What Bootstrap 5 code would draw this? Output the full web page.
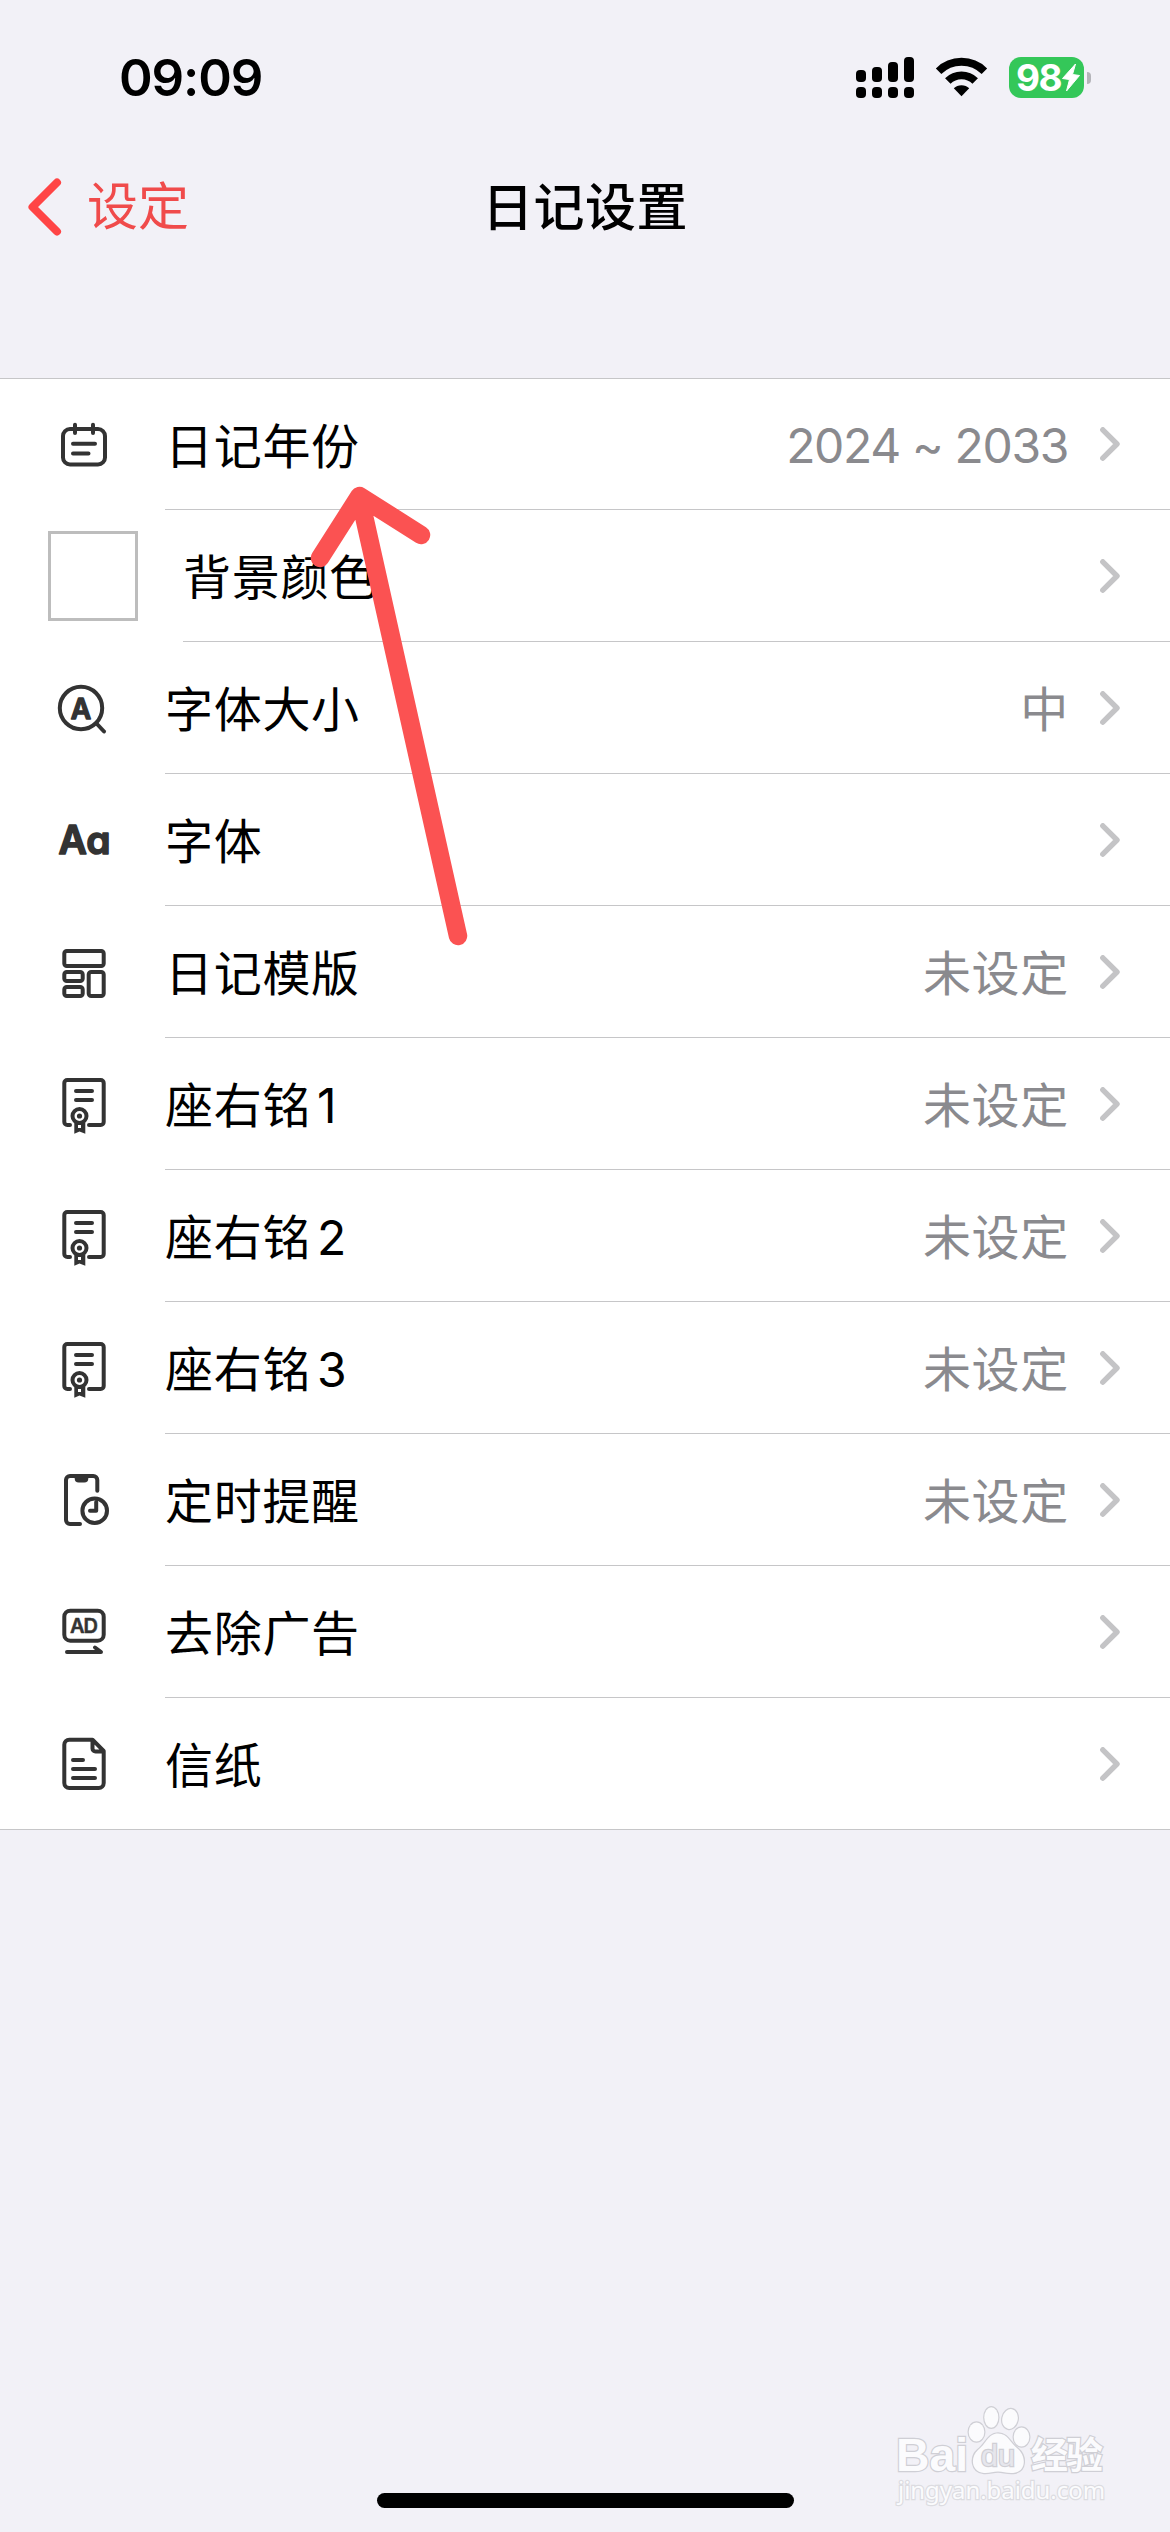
<!DOCTYPE html>
<html lang="zh-CN">
<head>
<meta charset="utf-8">
<meta name="viewport" content="width=device-width, initial-scale=1">
<title>日记设置</title>
<link href="https://cdn.jsdelivr.net/npm/bootstrap@5.3.0/dist/css/bootstrap.min.css" rel="stylesheet">
<style>
  body { background: #f2f1f7; color: #000; font-family: Inter, "Noto Sans CJK SC", sans-serif; }
  .screen { width: 1170px; height: 2532px; overflow: hidden; }
  svg { display: block; flex: none; }
  .status { height: 155px; padding: 0 79px 0 119px; }
  .clock { font-size: 51px; font-weight: 600; line-height: 60px; letter-spacing: -1.1px; padding-top: 1px; }
  .battery { width: 75px; height: 41px; border-radius: 12px; background: #34c759; color: #fff; font-size: 37px; font-weight: 700; line-height: 41px; padding-left: 7px; letter-spacing: -1.6px; }
  .nub { width: 4px; height: 12px; border-radius: 0 4px 4px 0; background: #b4b4b9; margin-left: 3px; }
  .topbar { height: 105px; padding: 0 28px; font-size: 51px; line-height: 60px; }
  .back { color: #f04b4b; gap: 25px; margin-top: -2px; }
  .heading { font-weight: 500; font-size: 51px; letter-spacing: .4px; line-height: 60px; margin: 0; }
  .settings { margin-top: 118px; border-top: 1px solid #c6c6c8; border-bottom: 1px solid #c6c6c8; background: #fff; }
  .setting { height: 132px; padding-left: 48px; gap: 45px; font-size: 48px; }
  .setting:first-child, .setting:last-child { height: 131px; }
  .setting:last-child .cell { border-bottom: 0; }
  .cell { border-bottom: 1px solid #c6c6c8; padding-right: 50px; }
  .label, .value { line-height: 60px; letter-spacing: .7px; padding-top: 5px; }
  .value { color: #8a8a8e; margin-right: 31px; }
  .years { letter-spacing: -1.35px; padding-top: 3px; margin-right: 32px; }
  .num { margin-left: 6px; }
  .swatch { width: 90px; height: 90px; border: 3px solid #bdbdbd; background: #fff; }
  .ico { width: 72px; height: 72px; fill: none; stroke: #333; stroke-width: 4; stroke-linecap: round; stroke-linejoin: round; }
  .ico text { fill: #333; font-family: Inter, sans-serif; font-weight: 600; font-feature-settings: "cv11"; }
  .pointer { left: 300px; top: 470px; }
  .homebar { width: 417px; height: 15px; border-radius: 8px; background: #000; left: 377px; top: 2493px; }
  .watermark { left: 880px; top: 2395px; }
</style>
</head>
<body>
<svg width="0" height="0" class="position-absolute" aria-hidden="true">
  <defs>
    <symbol id="chev" viewBox="0 0 20 34"><path d="M2.8 2.8 17 17 2.8 31.2" fill="none" stroke="#c4c4c6" stroke-width="5.4" stroke-linecap="round" stroke-linejoin="round"/></symbol>
    <symbol id="award" viewBox="0 0 72 72">
      <path d="M22 57H19.300a3 3 0 0 1-3-3V15a3 3 0 0 1 3-3H52.700a3 3 0 0 1 3 3V54a3 3 0 0 1-3 3H41M28 23H44M28 32H44"/>
      <circle cx="31.500" cy="48" r="7"/><circle cx="31.500" cy="48" r="2.600" fill="#333" stroke="none"/>
      <path d="M26.300 55V65.700L31.500 63.500 37.300 65.700V55Z" fill="#333" stroke="none"/><rect x="30" y="57" width="3" height="3" fill="#fff" stroke="none"/>
    </symbol>
  </defs>
</svg>
<main class="screen position-relative">
  <header>
    <div class="status d-flex align-items-center justify-content-between">
      <div class="clock">09:09</div>
      <div class="d-flex align-items-center">
        <svg width="58" height="41" viewBox="0 0 58 41"><rect y="13" width="10" height="12" rx="4"/><rect x="16" y="10" width="10" height="15" rx="4"/><rect x="32" y="5" width="10" height="20" rx="4"/><rect x="48" width="10" height="25" rx="4"/><rect y="30" width="10" height="11" rx="4"/><rect x="16" y="30" width="10" height="11" rx="4"/><rect x="32" y="30" width="10" height="11" rx="4"/><rect x="48" y="30" width="10" height="11" rx="4"/></svg>
        <svg class="wifi" width="95" height="41" viewBox="-22 0 95 41"><g fill="none" stroke="#000" stroke-width="7.800"><path d="M2.600 14.200A32.500 32.500 0 0 1 48.400 14.200"/><path d="M11.800 24A19.500 19.500 0 0 1 39.200 24"/></g><path d="M25.500 39.200 17.800 31.300A11 11 0 0 1 33.200 31.300Z"/></svg>
        <div class="battery d-flex align-items-center"><span>98</span><svg width="20" height="29" viewBox="0 0 20 29" class="ms-auto me-1"><path d="M14.500 1 1.500 15.500 8.500 16.500 5.500 28 18.500 12.500 11.500 11.500Z" fill="#fff" stroke="#fff" stroke-linejoin="round"/></svg></div>
        <div class="nub"></div>
      </div>
    </div>
    <nav class="topbar d-flex align-items-center position-relative">
      <div class="back d-flex align-items-center"><svg width="34" height="58" viewBox="0 0 34 58"><path d="M29 4.500 4.500 29 29 53.500" fill="none" stroke="#ff4545" stroke-width="8" stroke-linecap="round" stroke-linejoin="round"/></svg><span>设定</span></div>
      <h1 class="heading position-absolute top-50 start-50 translate-middle text-nowrap">日记设置</h1>
    </nav>
  </header>
  <section class="settings">
    <div class="setting d-flex align-items-center">
      <svg class="ico" viewBox="0 0 72 72"><rect x="15" y="20" width="42" height="35.500" rx="7"/><path d="M27 15.700V24M45 15.700V24M25 34.700H47M25 44.500H40.500"/></svg>
      <div class="cell d-flex align-items-center flex-fill h-100"><span class="label">日记年份</span><span class="value years ms-auto">2024 ~ 2033</span><svg width="20" height="34"><use href="#chev"/></svg></div>
    </div>
    <div class="setting d-flex align-items-center">
      <div class="swatch"></div>
      <div class="cell d-flex align-items-center flex-fill h-100"><span class="label">背景颜色</span><svg class="ms-auto" width="20" height="34"><use href="#chev"/></svg></div>
    </div>
    <div class="setting d-flex align-items-center">
      <svg class="ico" viewBox="0 0 72 72"><circle cx="33" cy="36" r="21.200"/><path d="M49 52 56 59.500"/><text x="33" y="46.500" font-size="28" text-anchor="middle" stroke-width="1.400">A</text></svg>
      <div class="cell d-flex align-items-center flex-fill h-100"><span class="label">字体大小</span><span class="value ms-auto">中</span><svg width="20" height="34"><use href="#chev"/></svg></div>
    </div>
    <div class="setting d-flex align-items-center">
      <svg class="ico" viewBox="0 0 72 72"><text x="10.500" y="49.500" font-size="39" stroke-width="1.600" textLength="52">Aa</text></svg>
      <div class="cell d-flex align-items-center flex-fill h-100"><span class="label">字体</span><svg class="ms-auto" width="20" height="34"><use href="#chev"/></svg></div>
    </div>
    <div class="setting d-flex align-items-center">
      <svg class="ico" viewBox="0 0 72 72"><rect x="16.300" y="15" width="39.400" height="15" rx="2.500"/><rect x="16.300" y="36" width="18.400" height="9" rx="2.500"/><rect x="16.300" y="51" width="18.400" height="9" rx="2.500"/><rect x="40.700" y="36" width="15" height="24" rx="2.500"/></svg>
      <div class="cell d-flex align-items-center flex-fill h-100"><span class="label">日记模版</span><span class="value ms-auto">未设定</span><svg width="20" height="34"><use href="#chev"/></svg></div>
    </div>
    <div class="setting d-flex align-items-center">
      <svg class="ico"><use href="#award"/></svg>
      <div class="cell d-flex align-items-center flex-fill h-100"><span class="label">座右铭<span class="num">1</span></span><span class="value ms-auto">未设定</span><svg width="20" height="34"><use href="#chev"/></svg></div>
    </div>
    <div class="setting d-flex align-items-center">
      <svg class="ico"><use href="#award"/></svg>
      <div class="cell d-flex align-items-center flex-fill h-100"><span class="label">座右铭<span class="num">2</span></span><span class="value ms-auto">未设定</span><svg width="20" height="34"><use href="#chev"/></svg></div>
    </div>
    <div class="setting d-flex align-items-center">
      <svg class="ico"><use href="#award"/></svg>
      <div class="cell d-flex align-items-center flex-fill h-100"><span class="label">座右铭<span class="num">3</span></span><span class="value ms-auto">未设定</span><svg width="20" height="34"><use href="#chev"/></svg></div>
    </div>
    <div class="setting d-flex align-items-center">
      <svg class="ico" viewBox="0 0 72 72"><path d="M49.300 26.700V16a4 4 0 0 0-4-4H22a4 4 0 0 0-4 4V56a4 4 0 0 0 4 4H32"/><path d="M26.700 12H40.300V14.500a4 4 0 0 1-4 4H30.700a4 4 0 0 1-4-4Z" fill="#333" stroke="none"/><circle cx="46.700" cy="46.700" r="12.300"/><path d="M48.200 38V46.800H42"/></svg>
      <div class="cell d-flex align-items-center flex-fill h-100"><span class="label">定时提醒</span><span class="value ms-auto">未设定</span><svg width="20" height="34"><use href="#chev"/></svg></div>
    </div>
    <div class="setting d-flex align-items-center">
      <svg class="ico" viewBox="0 0 72 72"><rect x="16.300" y="14.700" width="39.400" height="30" rx="6"/><text x="36" y="37.300" font-size="20" text-anchor="middle" stroke-width=".5" textLength="28">AD</text><path d="M19 56H53L47 51.500"/></svg>
      <div class="cell d-flex align-items-center flex-fill h-100"><span class="label">去除广告</span><svg class="ms-auto" width="20" height="34"><use href="#chev"/></svg></div>
    </div>
    <div class="setting d-flex align-items-center">
      <svg class="ico" viewBox="0 0 72 72"><path d="M44.500 11.700H21.300a5 5 0 0 0-5 5V55a5 5 0 0 0 5 5H50.700a5 5 0 0 0 5-5V23ZM44.500 12V20.500a3 3 0 0 0 3 3H55M25 32H35M25 41H47M25 50H47"/></svg>
      <div class="cell d-flex align-items-center flex-fill h-100"><span class="label">信纸</span><svg class="ms-auto" width="20" height="34"><use href="#chev"/></svg></div>
    </div>
  </section>

  <svg class="pointer position-absolute" width="180" height="490" viewBox="300 470 180 490"><path d="M458 936 359.500 496M320 558 359.500 496 421 535" fill="none" stroke="#fb5252" stroke-width="18.500" stroke-linecap="round" stroke-linejoin="round"/></svg>

  <svg class="watermark position-absolute" width="250" height="120" viewBox="880 2395 250 120">
    <g fill="#fbfbfd" stroke="#cfcfd5" stroke-width="2.400" paint-order="stroke" font-family="'Liberation Sans','Noto Sans CJK SC',sans-serif">
      <text x="896" y="2471" font-size="47" font-weight="700" textLength="72" lengthAdjust="spacingAndGlyphs">Bai</text>
      <ellipse cx="976.500" cy="2432" rx="7.800" ry="9.500"/><ellipse cx="991.300" cy="2417.500" rx="7" ry="10.300"/><ellipse cx="1010" cy="2419" rx="7.700" ry="10" transform="rotate(12 1010 2419)"/><ellipse cx="1021.500" cy="2437" rx="7.800" ry="9.500"/>
      <path d="M998 2433.500C1008 2433.500 1010 2443 1018 2449 1026 2456 1027 2472 1013 2473 1007 2473.500 1003 2471.500 998 2471.500S989 2473.500 984 2473C971 2472 970 2457 978 2450 986 2444 988 2433.500 998 2433.500Z"/>
      <text x="981" y="2466" font-size="30" textLength="34" lengthAdjust="spacingAndGlyphs" fill="#e6e6ec">du</text>
      <text x="1031" y="2469" font-size="37" font-weight="700" textLength="72">经验</text>
      <text x="898" y="2499" font-size="24" font-family="'Noto Sans','Open Sans',sans-serif" textLength="207" lengthAdjust="spacingAndGlyphs" stroke="#dcdce1">jingyan.baidu.com</text>
    </g>
  </svg>
  <div class="homebar position-absolute"></div>
</main>
<script src="https://cdn.jsdelivr.net/npm/bootstrap@5.3.0/dist/js/bootstrap.bundle.min.js"></script>
</body>
</html>
